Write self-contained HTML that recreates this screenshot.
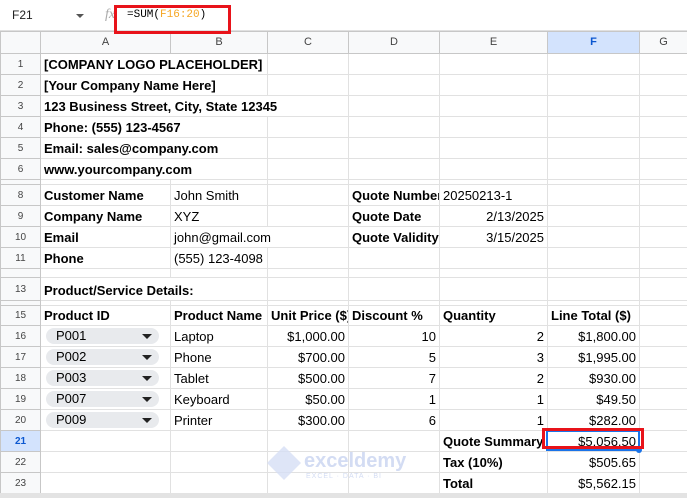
<!DOCTYPE html>
<html><head><meta charset="utf-8"><style>
*{margin:0;padding:0;box-sizing:border-box}
body{width:687px;height:498px;overflow:hidden;background:#fff;font-family:"Liberation Sans",Arial,sans-serif;position:relative}
.fb{position:absolute;left:0;top:0;width:687px;height:31px;background:#fff;border-bottom:1px solid #e0e0e0}
table{position:absolute;left:0;top:31px;width:687px;border-collapse:collapse;table-layout:fixed}
td{border:1px solid #e1e1e1;font-size:13px;color:#000;white-space:nowrap;overflow:visible;padding:0 3px;vertical-align:bottom;padding-bottom:2px;line-height:15px}
td.h{background:#f8f9fa;color:#444;font-size:11px;text-align:center;vertical-align:middle;padding:0;border-color:#c7c7c7}
td.rn{background:#f8f9fa;color:#444;font-size:10px;text-align:center;vertical-align:middle;padding:0;border-color:#c7c7c7}
.b{font-weight:bold}
.r{text-align:right}
.clip{overflow:hidden}
.nr{border-right-style:hidden}
.chip{display:inline-block;width:113px;height:16px;background:#e8eaed;border-radius:8px;padding-left:10px;position:relative;line-height:16px;margin-left:5px}
.chip:after{content:"";position:absolute;right:7px;top:6px;border-left:5px solid transparent;border-right:5px solid transparent;border-top:5px solid #222}
tr.s td{font-size:1px;line-height:1px;padding:0}
</style></head><body>
<div class="fb">
<div style="position:absolute;left:12px;top:8px;font-size:12px;color:#222">F21</div>
<div style="position:absolute;left:76px;top:14px;border-left:4px solid transparent;border-right:4px solid transparent;border-top:4px solid #555"></div>
<div style="position:absolute;left:105px;top:7px;font-size:14px;color:#aaa;font-style:italic;font-family:'Liberation Serif',serif">fx</div>
<div style="position:absolute;left:127px;top:9px;font-size:11px;font-family:'Liberation Mono',monospace;color:#000">=SUM(<span style="color:#f5a623">F16:20</span>)</div>
<div style="position:absolute;left:114px;top:5px;width:117px;height:29px;border:3px solid #e8131a;z-index:5"></div>
</div>
<table>
<colgroup><col style="width:40px"><col style="width:130px"><col style="width:97px"><col style="width:81px"><col style="width:91px"><col style="width:108px"><col style="width:92px"><col style="width:48px"></colgroup>
<tr style="height:22px"><td class="h"></td><td class="h">A</td><td class="h">B</td><td class="h">C</td><td class="h">D</td><td class="h">E</td><td class="h" style="background:#d3e3fd;color:#0b57d0;font-weight:bold">F</td><td class="h">G</td></tr>
<tr style="height:21px"><td class="rn">1</td><td class="b nr">[COMPANY LOGO PLACEHOLDER]</td><td></td><td></td><td></td><td></td><td></td><td></td></tr>
<tr style="height:21px"><td class="rn">2</td><td class="b nr">[Your Company Name Here]</td><td></td><td></td><td></td><td></td><td></td><td></td></tr>
<tr style="height:21px"><td class="rn">3</td><td class="b nr">123 Business Street, City, State 12345</td><td class="nr"></td><td></td><td></td><td></td><td></td><td></td></tr>
<tr style="height:21px"><td class="rn">4</td><td class="b nr">Phone: (555) 123-4567</td><td></td><td></td><td></td><td></td><td></td><td></td></tr>
<tr style="height:21px"><td class="rn">5</td><td class="b nr">Email: sales@company.com</td><td></td><td></td><td></td><td></td><td></td><td></td></tr>
<tr style="height:21px"><td class="rn">6</td><td class="b nr">www.yourcompany.com</td><td></td><td></td><td></td><td></td><td></td><td></td></tr>
<tr class="s" style="height:5px"><td class="rn"></td><td></td><td></td><td></td><td></td><td></td><td></td><td></td></tr>
<tr style="height:21px"><td class="rn">8</td><td class="b">Customer Name</td><td>John Smith</td><td></td><td class="b clip">Quote Number</td><td>20250213-1</td><td></td><td></td></tr>
<tr style="height:21px"><td class="rn">9</td><td class="b">Company Name</td><td>XYZ</td><td></td><td class="b">Quote Date</td><td class="r">2/13/2025</td><td></td><td></td></tr>
<tr style="height:21px"><td class="rn">10</td><td class="b">Email</td><td class="nr">john@gmail.com</td><td></td><td class="b clip">Quote Validity</td><td class="r">3/15/2025</td><td></td><td></td></tr>
<tr style="height:21px"><td class="rn">11</td><td class="b">Phone</td><td>(555) 123-4098</td><td></td><td></td><td></td><td></td><td></td></tr>
<tr class="s" style="height:9px"><td class="rn"></td><td></td><td></td><td></td><td></td><td></td><td></td><td></td></tr>
<tr style="height:23px"><td class="rn">13</td><td class="b nr">Product/Service Details:</td><td></td><td></td><td></td><td></td><td></td><td></td></tr>
<tr class="s" style="height:5px"><td class="rn"></td><td></td><td></td><td></td><td></td><td></td><td></td><td></td></tr>
<tr style="height:20px"><td class="rn">15</td><td class="b">Product ID</td><td class="b clip">Product Name</td><td class="b clip">Unit Price ($)</td><td class="b">Discount %</td><td class="b">Quantity</td><td class="b">Line Total ($)</td><td></td></tr>
<tr style="height:21px"><td class="rn">16</td><td style="padding:0 0 2px 0"><span class="chip">P001</span></td><td>Laptop</td><td class="r">$1,000.00</td><td class="r">10</td><td class="r">2</td><td class="r">$1,800.00</td><td></td></tr>
<tr style="height:21px"><td class="rn">17</td><td style="padding:0 0 2px 0"><span class="chip">P002</span></td><td>Phone</td><td class="r">$700.00</td><td class="r">5</td><td class="r">3</td><td class="r">$1,995.00</td><td></td></tr>
<tr style="height:21px"><td class="rn">18</td><td style="padding:0 0 2px 0"><span class="chip">P003</span></td><td>Tablet</td><td class="r">$500.00</td><td class="r">7</td><td class="r">2</td><td class="r">$930.00</td><td></td></tr>
<tr style="height:21px"><td class="rn">19</td><td style="padding:0 0 2px 0"><span class="chip">P007</span></td><td>Keyboard</td><td class="r">$50.00</td><td class="r">1</td><td class="r">1</td><td class="r">$49.50</td><td></td></tr>
<tr style="height:21px"><td class="rn">20</td><td style="padding:0 0 2px 0"><span class="chip">P009</span></td><td>Printer</td><td class="r">$300.00</td><td class="r">6</td><td class="r">1</td><td class="r">$282.00</td><td></td></tr>
<tr style="height:21px"><td class="rn" style="background:#d3e3fd;color:#0b57d0;font-weight:bold">21</td><td></td><td></td><td></td><td></td><td class="b clip">Quote Summary</td><td class="r">$5,056.50</td><td></td></tr>
<tr style="height:21px"><td class="rn">22</td><td></td><td></td><td></td><td></td><td class="b">Tax (10%)</td><td class="r">$505.65</td><td></td></tr>
<tr style="height:21px"><td class="rn">23</td><td></td><td></td><td></td><td></td><td class="b">Total</td><td class="r">$5,562.15</td><td></td></tr>
</table>
<div style="position:absolute;left:546px;top:430px;width:94px;height:21px;border:2px solid #1a73e8"></div>
<div style="position:absolute;left:636px;top:447px;width:6px;height:6px;border-radius:50%;background:#1a73e8"></div>
<div style="position:absolute;left:542px;top:428px;width:102px;height:21px;border:3px solid #e8131a"></div>
<div style="position:absolute;left:272px;top:451px;width:24px;height:24px;background:#d6dff5;transform:rotate(45deg);opacity:.8"></div>
<div style="position:absolute;left:304px;top:450px;font-size:20px;font-weight:bold;color:#d3dcf3">exceldemy</div>
<div style="position:absolute;left:306px;top:473px;font-size:7px;color:#d3dcf3;letter-spacing:1px">EXCEL · DATA · BI</div>
<div style="position:absolute;left:0;top:493px;width:687px;height:5px;background:#e3e3e3"></div>
</body></html>
